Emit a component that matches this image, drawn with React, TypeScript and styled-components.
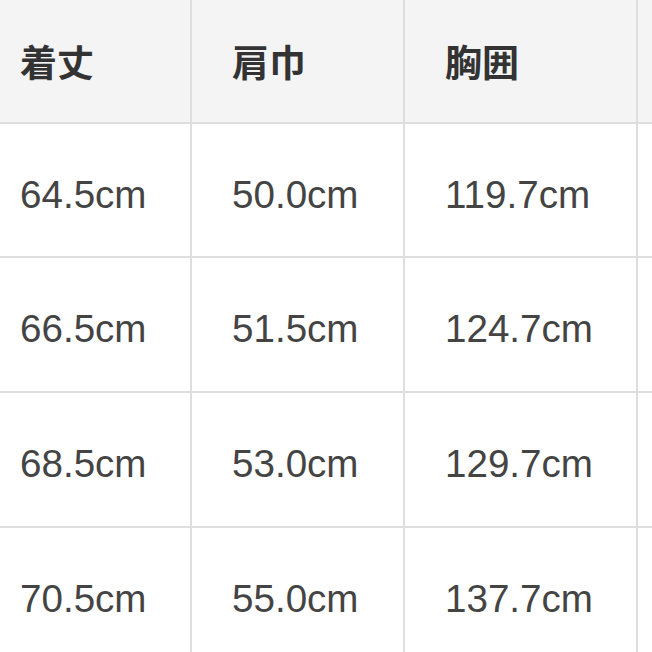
import React from 'react'
import styled, { createGlobalStyle } from 'styled-components'

const GlobalStyle = createGlobalStyle`
	html, body {
		margin: 0;
		padding: 0;
		background: #ffffff;
	}
	body {
		width: 652px;
		height: 652px;
		overflow: hidden;
	}
`

const Frame = styled.div`
	width: 652px;
	height: 652px;
	overflow: hidden;
	background: #ffffff;
`

const SizeGrid = styled.div`
	display: grid;
	grid-template-columns: 212px 213px 233px 220px;
	grid-template-rows: 124px 134px 135px 135px 135px;
	margin-left: -20px;
	width: max-content;
`

const Cell = styled.div<{ $head?: boolean }>`
	box-sizing: border-box;
	display: flex;
	align-items: center;
	padding-left: 40px;
	padding-top: ${props => props.$head ? '0' : '9px'};
	border-right: 2px solid #dedede;
	border-bottom: 2px solid #dedede;
	background: ${props => props.$head ? '#f4f4f4' : '#ffffff'};
	color: ${props => props.$head ? '#333333' : '#444444'};
	font-family: ${props => props.$head
		? '"Noto Sans CJK JP", "Noto Sans", sans-serif'
		: '"Liberation Sans", Arial, sans-serif'};
	font-size: ${props => props.$head ? '37px' : '38.6px'};
	font-weight: ${props => props.$head ? 700 : 400};
	white-space: nowrap;
`

const headers = ['着丈', '肩巾', '胸囲', '']

const rows = [
	['64.5cm', '50.0cm', '119.7cm', ''],
	['66.5cm', '51.5cm', '124.7cm', ''],
	['68.5cm', '53.0cm', '129.7cm', ''],
	['70.5cm', '55.0cm', '137.7cm', ''],
]

const App = () => {
	return (
		<>
			<GlobalStyle />
			<Frame>
				<SizeGrid>
					{headers.map((h, i) => (
						<Cell $head key={`h${i}`}>{h}</Cell>
					))}
					{rows.map((row, r) =>
						row.map((value, c) => (
							<Cell key={`${r}-${c}`}>{value}</Cell>
						))
					)}
				</SizeGrid>
			</Frame>
		</>
	)
}

export default App
